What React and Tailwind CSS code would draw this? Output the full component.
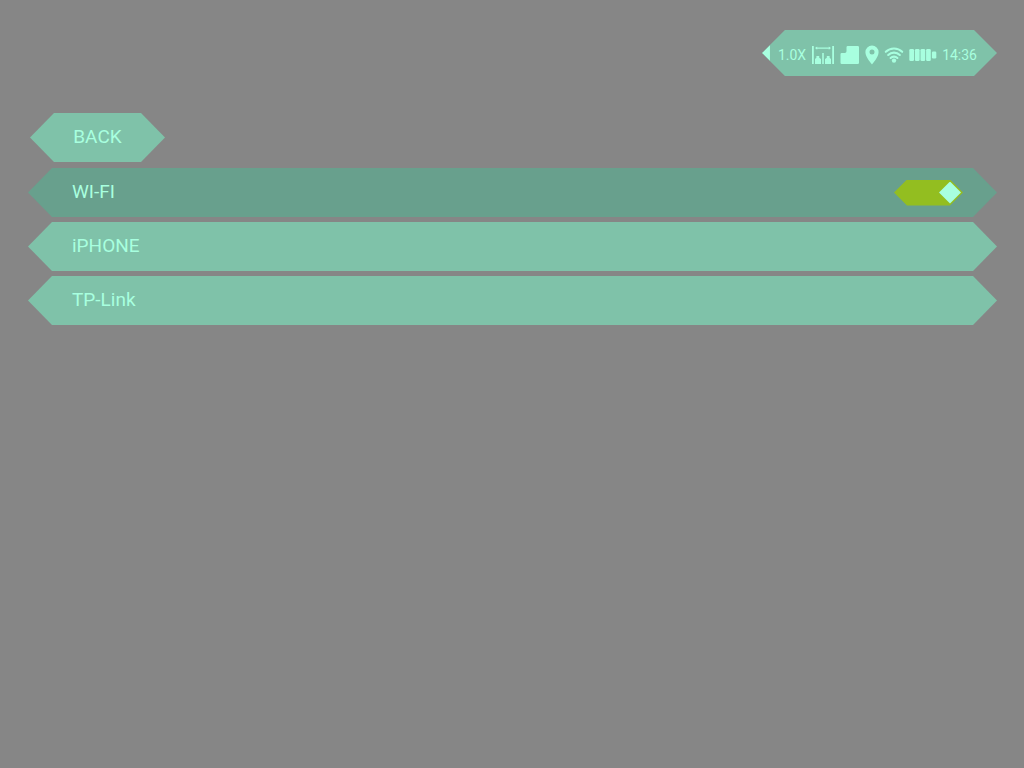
import { useState } from "react";

function RangeIcon() {
  return (
    <svg width="24" height="20" viewBox="0 0 24 20" fill="currentColor" aria-hidden="true">
      <path d="M1 1h1.800v18H1zM21.200 1H23v18h-1.800z" />
      <path d="M5 2.500h14v1.200H5z" />
      <path d="M4 3.100 6.200 1.400v3.400zM20 3.100l-2.200-1.700v3.400z" />
      <path d="M11.200 8h1.600v11h-1.600z" />
      <path d="M4 19v-5l1.400-1.200V11h2.800v1.800l1.800 1.200V19zM14 19v-5l1.800-1.200V11h2.800v1.800L20 14v5z" />
    </svg>
  );
}

function CardIcon() {
  return (
    <svg width="20" height="20" viewBox="0 0 20 20" fill="currentColor" aria-hidden="true">
      <path d="M7.700 1H17.800a1.200 1.200 0 0 1 1.200 1.200v15.600a1.200 1.200 0 0 1-1.200 1.200H1.700a1.200 1.200 0 0 1-1.200-1.200V9.200A1.200 1.200 0 0 1 1.700 8H4.800a1.700 1.700 0 0 0 1.700-1.700V2.200A1.200 1.200 0 0 1 7.700 1z" />
    </svg>
  );
}

function PinIcon() {
  return (
    <svg width="14" height="20" viewBox="0 0 14 20" fill="currentColor" aria-hidden="true">
      <path fillRule="evenodd" d="M7 .6A6.600 6.600 0 0 0 .4 7.200C.4 12 7 19.400 7 19.400S13.600 12 13.600 7.200A6.600 6.600 0 0 0 7 .6zm0 4a2.500 2.500 0 1 1 0 5 2.500 2.500 0 0 1 0-5z" />
    </svg>
  );
}

function WifiIcon() {
  return (
    <svg width="20" height="16" viewBox="0 0 20 16" fill="none" stroke="currentColor" strokeWidth="2.100" strokeLinecap="round" aria-hidden="true">
      <path d="M1.800 4.800a11.800 11.800 0 0 1 16.400 0M4.200 8a8.300 8.300 0 0 1 11.600 0M6.600 11a4.800 4.800 0 0 1 6.800 0" />
      <circle cx="10" cy="13.600" r="2.200" fill="currentColor" stroke="none" />
    </svg>
  );
}

function BatteryIcon() {
  return (
    <svg width="28" height="12" viewBox="0 0 28 12" fill="currentColor" aria-hidden="true">
      <rect x="0.300" width="4.700" height="12" rx="1.300" />
      <rect x="5.900" width="4.700" height="12" rx="1.300" />
      <rect x="11.500" width="4.700" height="12" rx="1.300" />
      <rect x="17.100" width="4.700" height="12" rx="1.300" />
      <rect x="22.900" y="2.600" width="4.400" height="6.800" rx="1.200" />
    </svg>
  );
}

function StatusBar() {
  return (
    <header className="flex h-[46px] items-center bg-[#7fc2a9] text-sm [clip-path:polygon(23px_0,calc(100%_-_23px)_0,100%_50%,calc(100%_-_23px)_100%,23px_100%,0_50%)]">
      <span className="h-4 w-2 bg-[#a8ffdf] [clip-path:polygon(0_50%,100%_0,100%_100%)]" />
      <div className="flex items-center gap-[5px] pt-[3px] pr-5 pl-2">
        <span>1.0X</span>
        <RangeIcon />
        <CardIcon />
        <PinIcon />
        <WifiIcon />
        <BatteryIcon />
        <time>14:36</time>
      </div>
    </header>
  );
}

const row =
  "flex h-[49px] w-full items-center justify-between pr-[34px] pl-11 text-left [clip-path:polygon(24px_0,calc(100%_-_24px)_0,100%_50%,calc(100%_-_24px)_100%,24px_100%,0_50%)]";

export default function App() {
  const [enabled, setEnabled] = useState(true);

  return (
    <div className="min-h-screen bg-[#868686] pt-[30px] pr-[27px] pl-7 font-['Roboto',sans-serif] text-[#a8ffdf]">
      <div className="flex justify-end">
        <StatusBar />
      </div>
      <main className="pt-[37px] text-[19px]">
        <button
          type="button"
          className="mb-[6px] ml-[2px] flex h-[49px] w-[135px] items-center justify-center bg-[#7fc2a9] [clip-path:polygon(24px_0,calc(100%_-_24px)_0,100%_50%,calc(100%_-_24px)_100%,24px_100%,0_50%)]"
        >
          BACK
        </button>
        <div className="flex flex-col gap-[5px]">
          <label htmlFor="wifi" className={`${row} bg-[#68a08d]`}>
            WI-FI
            <input
              id="wifi"
              type="checkbox"
              role="switch"
              checked={enabled}
              onChange={(e) => setEnabled(e.target.checked)}
              className="flex h-[26px] w-[69px] appearance-none items-center bg-[#777777] px-[2px] [clip-path:polygon(13px_0,calc(100%_-_13px)_0,100%_50%,calc(100%_-_13px)_100%,13px_100%,0_50%)] before:h-[22px] before:w-[22px] before:bg-[#a8ffdf] before:content-[''] before:[clip-path:polygon(50%_0,100%_50%,50%_100%,0_50%)] checked:justify-end checked:bg-[#93be20]"
            />
          </label>
          <button type="button" className={`${row} bg-[#7fc2a9]`}>
            iPHONE
          </button>
          <button type="button" className={`${row} bg-[#7fc2a9]`}>
            TP-Link
          </button>
        </div>
      </main>
    </div>
  );
}
